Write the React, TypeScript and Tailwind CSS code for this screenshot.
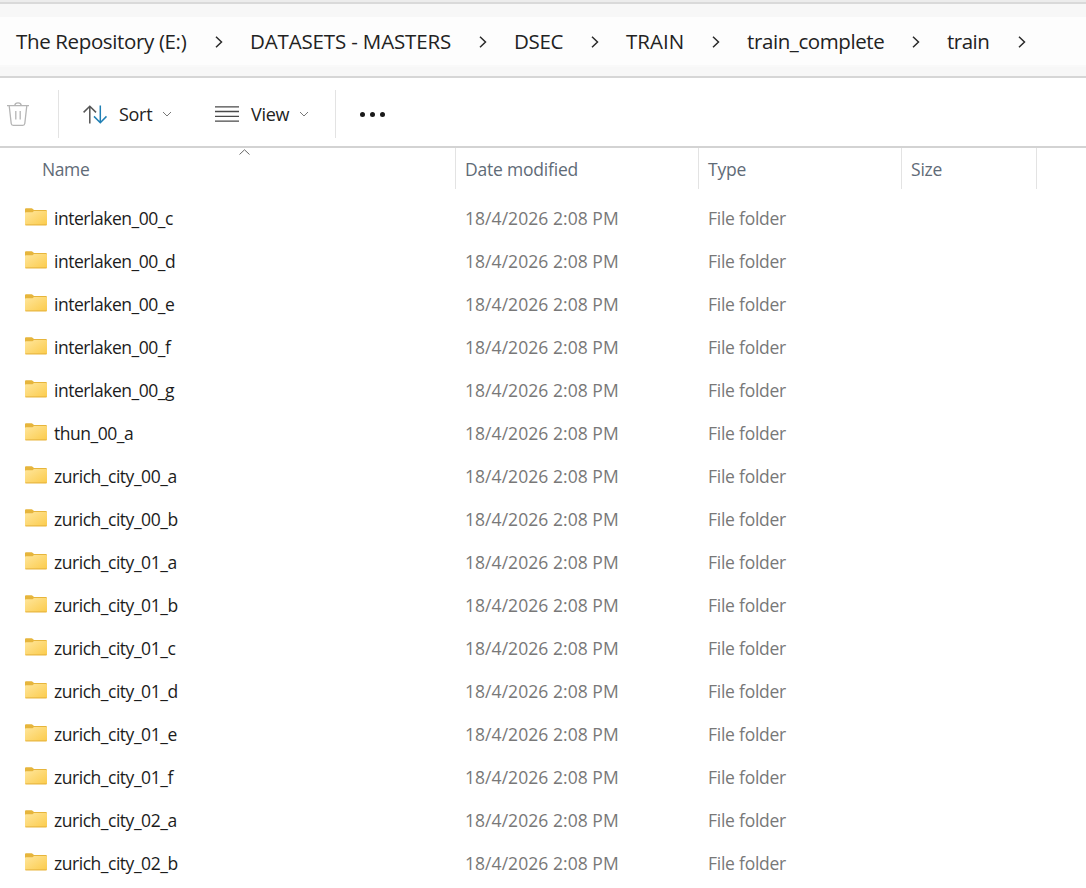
import React from "react";

const crumbs = [
  { label: "The Repository (E:)", box: "w-[171px]", text: "tracking-[-0.36px]" },
  { label: "DATASETS - MASTERS", box: "w-[201px]", text: "tracking-[-0.15px]" },
  { label: "DSEC", box: "w-[49px]", text: "tracking-[-0.3px]" },
  { label: "TRAIN", box: "w-[58px]", text: "tracking-[0px]" },
  { label: "train_complete", box: "w-[137px]", text: "tracking-[-0.4px]" },
  { label: "train", box: "w-[43px]", text: "tracking-[-0.5px]" },
];

const folders = [
  "interlaken_00_c",
  "interlaken_00_d",
  "interlaken_00_e",
  "interlaken_00_f",
  "interlaken_00_g",
  "thun_00_a",
  "zurich_city_00_a",
  "zurich_city_00_b",
  "zurich_city_01_a",
  "zurich_city_01_b",
  "zurich_city_01_c",
  "zurich_city_01_d",
  "zurich_city_01_e",
  "zurich_city_01_f",
  "zurich_city_02_a",
  "zurich_city_02_b",
];

const FolderIcon = () => (
  <svg className="mb-1 block h-[18px] w-[23px] shrink-0" viewBox="0 0 23 18">
    <defs>
      <linearGradient id="folder" x1="0" y1="0" x2="1" y2="1">
        <stop offset="0" stopColor="#ffe69c" />
        <stop offset="1" stopColor="#fbcb4b" />
      </linearGradient>
    </defs>
    <path d="M0 1.2Q0 0.3 1 0.3H6.6Q7.2 0.3 7.6 0.8L9 2H21Q21.9 2 21.9 3V8H0Z" fill="#e6b53c" />
    <path d="M0 5Q0 4.2 0.9 4.2H7Q7.6 4.2 8.1 3.7L8.9 3H21.1Q22 3 22 3.9V16.4Q22 17.2 21.1 17.2H0.9Q0 17.2 0 16.4Z" fill="url(#folder)" />
    <path d="M0.4 16.9H21.6" stroke="#e2ae3a" strokeWidth="0.9" />
  </svg>
);

const ChevronDown = () => (
  <svg className="h-[6px] w-[10px]" viewBox="0 0 10 6" fill="none" stroke="#777777">
    <path d="M1 1L5 5L9 1" />
  </svg>
);

const App = () => {
  return (
    <div className="h-[888px] w-[1086px] overflow-hidden bg-white font-['Open_Sans',sans-serif]">
      <div className="h-1 border-b-2 border-[#d9d9d9] bg-[#ececec]" />

      {/* address bar */}
      <div className="h-[74px] border-b-2 border-[#d6d6d6] bg-[#f7f7f7] pt-[13px]">
        <div className="flex h-[50px] items-center border-b-2 border-[#f9f9f9] bg-[#fdfdfd] pt-px pl-4 text-[20.5px] text-[#222222]">
          {crumbs.map((crumb) => (
            <div key={crumb.label} className="flex items-center">
              <div className={`whitespace-nowrap ${crumb.box}`}>
                <span className={crumb.text}>{crumb.label}</span>
              </div>
              <div className="flex w-[63px] justify-center">
                <svg className="h-3 w-2" viewBox="0 0 8 12" fill="none" stroke="#2a2a2a" strokeWidth="1.5">
                  <path d="M1 0.7L6.5 6L1 11.3" />
                </svg>
              </div>
            </div>
          ))}
        </div>
      </div>

      {/* toolbar */}
      <div className="flex h-[70px] items-center border-b-2 border-[#d3d3d3] pt-1 pl-[7px] text-lg text-[#222222]">
        <svg className="h-6 w-[22px]" viewBox="0 0 22 24" fill="none" stroke="#b5b5b5" strokeWidth="1.3">
          <path d="M0 3.6H22M2.2 3.8L4.2 21.5Q4.4 23.3 6.2 23.3H15.8Q17.6 23.3 17.8 21.5L19.8 3.8M7.8 3.4Q8 0.8 11 0.8T14.2 3.4M8.8 9V17.5M13.2 9V17.5" />
        </svg>
        <div className="ml-[29px] h-12 w-px bg-[#e3e3e3]" />
        <div className="flex w-[156px] items-center pl-[24px]">
          <svg className="h-[19px] w-6" viewBox="0 0 24 19" fill="none" strokeWidth="1.5">
            <path d="M0.6 7.4L6.8 1.2L13 7.4M6.8 1.4V18.6" stroke="#555555" />
            <path d="M11 11.4L17.3 17.7L23.5 11.4M17.3 17.5V0.6" stroke="#1f7fb4" />
          </svg>
          <span className="ml-3 w-[43px] tracking-[-0.3px]">Sort</span>
          <ChevronDown />
        </div>
        <div className="flex w-[120px] items-center">
          <svg className="h-4 w-6" viewBox="0 0 24 16" stroke="#4a4a4a" strokeWidth="1.3">
            <path d="M0 0.8H24M0 5.5H24M0 10.3H24M0 15.1H24" />
          </svg>
          <span className="ml-3 w-12 tracking-[-0.3px]">View</span>
          <ChevronDown />
        </div>
        <div className="h-12 w-px bg-[#e3e3e3]" />
        <div className="flex gap-[5px] pl-[24px]">
          <div className="size-[5px] rounded-full bg-[#1a1a1a]" />
          <div className="size-[5px] rounded-full bg-[#1a1a1a]" />
          <div className="size-[5px] rounded-full bg-[#1a1a1a]" />
        </div>
      </div>

      {/* column headers */}
      <div className="flex h-[41px] text-[17.5px] leading-[42px] tracking-[-0.2px] text-[#5f6b77]">
        <div className="relative w-[456px] border-r border-[#e3e3e3] pl-[42px]">
          <span className="tracking-[-0.4px]">Name</span>
          <svg className="absolute top-[1px] left-[239px] h-[6px] w-[11px]" viewBox="0 0 11 6" fill="none" stroke="#666666">
            <path d="M0.5 5.5L5.5 0.8L10.5 5.5" />
          </svg>
        </div>
        <div className="w-[243px] border-r border-[#e3e3e3] pl-[9px]">Date modified</div>
        <div className="w-[203px] border-r border-[#e3e3e3] pl-[9px]">Type</div>
        <div className="w-[135px] border-r border-[#e3e3e3] pl-[9px]">Size</div>
      </div>

      {/* rows */}
      <div className="pt-2 text-[17.5px]">
        {folders.map((name) => (
          <div key={name} className="flex h-[43px] items-center pl-[25px]">
            <div className="flex w-[440px] items-center">
              <FolderIcon />
              <span className="pl-[6px] tracking-[-0.47px] text-[#1c1c1c]">{name}</span>
            </div>
            <span className="w-[243px] tracking-[0.05px] text-[#787878]">18/4/2026 2:08 PM</span>
            <span className="tracking-[-0.25px] text-[#787878]">File folder</span>
          </div>
        ))}
      </div>
    </div>
  );
};

export default App;
